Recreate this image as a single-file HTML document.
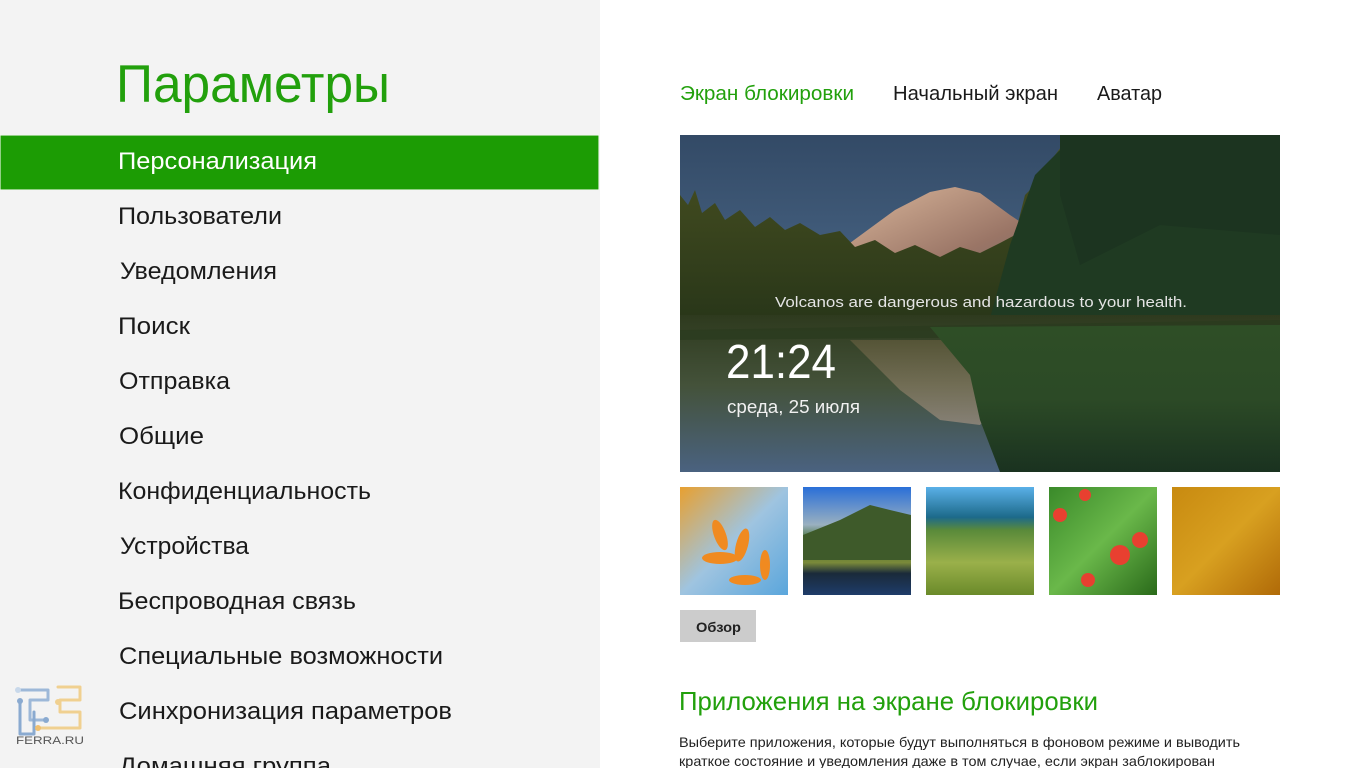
<!DOCTYPE html>
<html><head><meta charset="utf-8"><style>
html,body{margin:0;padding:0;width:1366px;height:768px;overflow:hidden;background:#fff;font-family:"Liberation Sans","DejaVu Sans",sans-serif}
svg{position:absolute;left:0;top:0}
</style></head><body>
<svg width="1366" height="768" viewBox="0 0 1366 768" font-family="Liberation Sans, DejaVu Sans, sans-serif">
<defs>
<linearGradient id="sky" x1="0" y1="0" x2="0" y2="1"><stop offset="0" stop-color="#334a66"/><stop offset="1" stop-color="#5f82a6"/></linearGradient>
<linearGradient id="mtn" x1="0" y1="0" x2="1" y2="1"><stop offset="0" stop-color="#d8b59a"/><stop offset="0.6" stop-color="#9a7566"/><stop offset="1" stop-color="#6f6a6a"/></linearGradient>
<linearGradient id="trees" x1="0" y1="0" x2="0" y2="1"><stop offset="0" stop-color="#4a5222"/><stop offset="1" stop-color="#263418"/></linearGradient>
<linearGradient id="water" x1="0" y1="0" x2="0" y2="1"><stop offset="0" stop-color="#2e3a1e"/><stop offset="0.45" stop-color="#44523a"/><stop offset="1" stop-color="#4a6280"/></linearGradient>
<linearGradient id="grass" x1="0" y1="0" x2="0" y2="1"><stop offset="0" stop-color="#2e4e26"/><stop offset="0.5" stop-color="#2c4a26"/><stop offset="1" stop-color="#1a3220"/></linearGradient>
<linearGradient id="refl" x1="0" y1="0" x2="0" y2="1"><stop offset="0" stop-color="#6a6040"/><stop offset="1" stop-color="#b09a88"/></linearGradient>
<linearGradient id="t1" x1="0" y1="0" x2="1" y2="1"><stop offset="0" stop-color="#e8a030"/><stop offset="0.5" stop-color="#9fc4e0"/><stop offset="1" stop-color="#5aa6dc"/></linearGradient>
<linearGradient id="t2" x1="0" y1="0" x2="0" y2="1"><stop offset="0" stop-color="#2a6fd8"/><stop offset="0.35" stop-color="#9ab0c0"/><stop offset="0.5" stop-color="#3d6a2a"/><stop offset="0.7" stop-color="#7a8a3a"/><stop offset="0.8" stop-color="#1a2a3a"/><stop offset="1" stop-color="#1e3c6a"/></linearGradient>
<linearGradient id="t3" x1="0" y1="0" x2="0" y2="1"><stop offset="0" stop-color="#5ab0e8"/><stop offset="0.28" stop-color="#1d6a8a"/><stop offset="0.4" stop-color="#5a8a3a"/><stop offset="0.7" stop-color="#9ab04a"/><stop offset="1" stop-color="#6a8a2a"/></linearGradient>
<linearGradient id="t4" x1="0" y1="0" x2="1" y2="1"><stop offset="0" stop-color="#3a8a2a"/><stop offset="0.5" stop-color="#6ab84a"/><stop offset="1" stop-color="#2a6a1a"/></linearGradient>
<linearGradient id="t5" x1="0" y1="0" x2="1" y2="1"><stop offset="0" stop-color="#c88a10"/><stop offset="0.5" stop-color="#d8a020"/><stop offset="1" stop-color="#b06a08"/></linearGradient>
</defs>
<rect x="0" y="0" width="600" height="768" fill="#f3f3f3"/>
<text x="116" y="102" font-size="53" fill="#22a00c" textLength="274" lengthAdjust="spacingAndGlyphs">Параметры</text>
<rect x="0.5" y="135.5" width="598" height="54" fill="#1c9c04" stroke="#9fd690" stroke-dasharray="1,1"/>
<g font-size="24" fill="#1a1a1a">
<text x="118" y="169" fill="#fff" textLength="199" lengthAdjust="spacingAndGlyphs">Персонализация</text>
<text x="118" y="224" textLength="164" lengthAdjust="spacingAndGlyphs">Пользователи</text>
<text x="120" y="279" textLength="157" lengthAdjust="spacingAndGlyphs">Уведомления</text>
<text x="118" y="334" textLength="72" lengthAdjust="spacingAndGlyphs">Поиск</text>
<text x="119" y="389" textLength="111" lengthAdjust="spacingAndGlyphs">Отправка</text>
<text x="119" y="444" textLength="85" lengthAdjust="spacingAndGlyphs">Общие</text>
<text x="118" y="499" textLength="253" lengthAdjust="spacingAndGlyphs">Конфиденциальность</text>
<text x="120" y="554" textLength="129" lengthAdjust="spacingAndGlyphs">Устройства</text>
<text x="118" y="609" textLength="238" lengthAdjust="spacingAndGlyphs">Беспроводная связь</text>
<text x="119" y="664" textLength="324" lengthAdjust="spacingAndGlyphs">Специальные возможности</text>
<text x="119" y="719" textLength="333" lengthAdjust="spacingAndGlyphs">Синхронизация параметров</text>
<text x="119" y="774" textLength="212" lengthAdjust="spacingAndGlyphs">Домашняя группа</text>
</g>
<g fill="none" stroke-linecap="round" stroke-linejoin="round">
<path d="M20 690 H48 V700 H30 V720 H45" stroke="#9db8d8" stroke-width="3"/>
<path d="M20 701 V734 H34 V712" stroke="#8aaad0" stroke-width="3"/>
<path d="M58 687 H80 V700 H60 V712 H80 V728 H38" stroke="#f0d090" stroke-width="3"/>
<circle cx="18" cy="690" r="3" fill="#c8d8ea"/><circle cx="20" cy="701" r="3" fill="#8aaad0"/>
<circle cx="46" cy="720" r="3" fill="#8aaad0"/><circle cx="58" cy="702" r="3" fill="#f0d090"/><circle cx="38" cy="728" r="3" fill="#f0c070"/>
</g>
<text x="16" y="744" font-size="11" fill="#555" textLength="68" lengthAdjust="spacingAndGlyphs">FERRA.RU</text>
<text x="680" y="100" font-size="20" fill="#22a00c" textLength="174" lengthAdjust="spacingAndGlyphs">Экран блокировки</text>
<text x="893" y="100" font-size="20" fill="#1a1a1a" textLength="165" lengthAdjust="spacingAndGlyphs">Начальный экран</text>
<text x="1097" y="100" font-size="20" fill="#1a1a1a" textLength="65" lengthAdjust="spacingAndGlyphs">Аватар</text>
<svg x="680" y="135" width="600" height="337" viewBox="0 0 600 337">
<rect width="600" height="337" fill="url(#sky)"/>
<polygon points="170,108 215,75 250,57 275,52 300,58 330,80 360,100 380,112 380,150 170,150" fill="url(#mtn)"/>
<polygon points="0,60 8,70 15,55 22,78 35,68 45,85 60,75 75,92 90,82 105,95 120,88 140,100 160,96 175,112 195,105 215,118 235,110 260,122 280,112 300,118 320,108 335,100 345,60 360,45 375,20 390,0 600,0 600,200 0,200" fill="url(#trees)"/>
<polygon points="330,110 355,40 380,15 395,0 600,0 600,220 300,220" fill="#1f3a22"/>
<polygon points="380,0 600,0 600,100 480,90 400,130 380,60" fill="#1c3420"/>
<rect x="0" y="180" width="600" height="157" fill="url(#water)"/>
<polygon points="170,205 360,205 340,250 300,290 260,285 220,255" fill="url(#refl)" opacity="0.6"/>
<polygon points="0,195 600,185 600,200 0,205" fill="#2a3a1e" opacity="0.7"/>
<polygon points="250,192 600,190 600,337 320,337 300,285 290,240" fill="url(#grass)"/>
<text x="95" y="172" font-size="15" fill="#e4e4e4" textLength="412" lengthAdjust="spacingAndGlyphs">Volcanos are dangerous and hazardous to your health.</text>
<text x="46" y="243" font-size="48" fill="#fff" textLength="110" lengthAdjust="spacingAndGlyphs">21:24</text>
<text x="47" y="278" font-size="18" fill="#f0f0f0" textLength="133" lengthAdjust="spacingAndGlyphs">среда, 25 июля</text>
</svg>
<rect x="680" y="487" width="108" height="108" fill="url(#t1)"/>
<g fill="#f08a20"><ellipse cx="720" cy="535" rx="6" ry="16" transform="rotate(-20 720 535)"/><ellipse cx="742" cy="545" rx="6" ry="17" transform="rotate(15 742 545)"/><ellipse cx="720" cy="558" rx="18" ry="6"/><ellipse cx="745" cy="580" rx="16" ry="5"/><ellipse cx="765" cy="565" rx="5" ry="15"/></g>
<rect x="803" y="487" width="108" height="108" fill="url(#t2)"/>
<polygon points="803,535 840,520 870,505 890,510 911,515 911,560 803,560" fill="#3e5a2a"/>
<rect x="926" y="487" width="108" height="108" fill="url(#t3)"/>
<rect x="1049" y="487" width="108" height="108" fill="url(#t4)"/>
<g fill="#e84030"><circle cx="1120" cy="555" r="10"/><circle cx="1140" cy="540" r="8"/><circle cx="1060" cy="515" r="7"/><circle cx="1085" cy="495" r="6"/><circle cx="1088" cy="580" r="7"/></g>
<rect x="1172" y="487" width="108" height="108" fill="url(#t5)"/>
<rect x="680" y="610" width="76" height="32" fill="#cccccc"/>
<text x="696" y="632" font-size="14" font-weight="bold" fill="#222" textLength="45" lengthAdjust="spacingAndGlyphs">Обзор</text>
<text x="679" y="710" font-size="26" fill="#22a00c" textLength="419" lengthAdjust="spacingAndGlyphs">Приложения на экране блокировки</text>
<text x="679" y="747" font-size="14" fill="#222" textLength="561" lengthAdjust="spacingAndGlyphs">Выберите приложения, которые будут выполняться в фоновом режиме и выводить</text>
<text x="679" y="766" font-size="14" fill="#222" textLength="536" lengthAdjust="spacingAndGlyphs">краткое состояние и уведомления даже в том случае, если экран заблокирован</text>
</svg>
</body></html>
